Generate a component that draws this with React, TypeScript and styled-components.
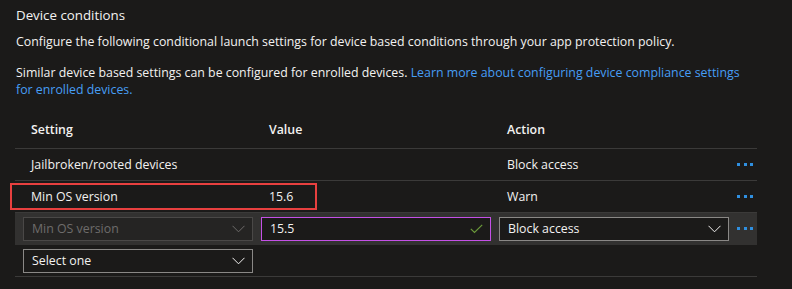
import React from 'react';
import styled, { createGlobalStyle } from 'styled-components';

const GlobalStyle = createGlobalStyle`
  body {
    margin: 0;
    background: #1b1a19;
    color: #f3f2f1;
    font-family: 'Open Sans', 'Liberation Sans', sans-serif;
    font-size: 12.35px;
  }
`;

const Page = styled.div`
  padding: 5px 16px 0 16px;
  width: 792px;
  height: 289px;
  box-sizing: border-box;
`;

const Title = styled.h2`
  margin: 0;
  font-size: 13.3px;
  font-weight: 400;
  line-height: 20px;
`;

const Text = styled.p<{ gap: number }>`
  margin: ${(p) => p.gap}px 0 0;
  line-height: 17px;
`;

const Link = styled.a`
  color: #479ef5;
  text-decoration: none;
`;

const Table = styled.div`
  margin: 15px 0 0 -1px;
  width: 742px;
`;

const Row = styled.div<{ active?: boolean; head?: boolean }>`
  position: relative;
  display: grid;
  grid-template-columns: 230px 230px 230px 20px;
  column-gap: 8px;
  padding-left: 8px;
  padding-bottom: ${(p) => (p.head ? 2 : 0)}px;
  height: ${(p) => (p.head ? 33 : 31)}px;
  align-items: center;
  border-bottom: 1px solid ${(p) => (p.active ? '#323130' : '#3b3a39')};
  background: ${(p) => (p.active ? '#323130' : 'transparent')};
`;

const Cell = styled.div<{ head?: boolean }>`
  padding-left: 8px;
  font-weight: ${(p) => (p.head ? 600 : 400)};
  white-space: nowrap;
`;

const Highlight = styled.div`
  position: absolute;
  left: -5px;
  top: 2px;
  width: 303px;
  height: 23px;
  border: 2px solid #e8403f;
  pointer-events: none;
`;

const Field = styled.div<{ tone: 'disabled' | 'focus' | 'normal' }>`
  display: flex;
  align-items: center;
  justify-content: space-between;
  box-sizing: border-box;
  height: 24px;
  padding: 0 7px 0 8px;
  border: 1px solid
    ${(p) =>
      p.tone === 'disabled' ? '#4a4847' : p.tone === 'focus' ? '#c450e6' : '#8a8886'};
  background: ${(p) => (p.tone === 'disabled' ? '#252423' : '#1b1a19')};
  color: ${(p) => (p.tone === 'disabled' ? '#6e6c6b' : '#f3f2f1')};
`;

const More = styled.div`
  display: flex;
  gap: 3.5px;
  span {
    width: 3px;
    height: 3px;
    background: #2f8fe0;
  }
`;

const Chevron = ({ color }: { color: string }) => (
  <svg width="13" height="8" viewBox="0 0 13 8">
    <path d="M0.5 0.8 L6.5 6.8 L12.5 0.8" fill="none" stroke={color} strokeWidth="1" />
  </svg>
);

const Check = () => (
  <svg width="13" height="10" viewBox="0 0 13 10">
    <path d="M0.8 4.8 L4.5 8.5 L12.2 0.8" fill="none" stroke="#6b9a3a" strokeWidth="1.2" />
  </svg>
);

const Dots = () => (
  <More>
    <span />
    <span />
    <span />
  </More>
);

export default function App() {
  return (
    <Page>
      <GlobalStyle />
      <Title>Device conditions</Title>
      <Text gap={8}>
        Configure the following conditional launch settings for device based conditions through
        your app protection policy.
      </Text>
      <Text gap={14}>
        Similar device based settings can be configured for enrolled devices.{' '}
        <Link href="#">
          Learn more about configuring device compliance settings
          <br />
          for enrolled devices.
        </Link>
      </Text>
      <Table>
        <Row head>
          <Cell head>Setting</Cell>
          <Cell head>Value</Cell>
          <Cell head>Action</Cell>
          <div />
        </Row>
        <Row>
          <Cell>Jailbroken/rooted devices</Cell>
          <Cell />
          <Cell>Block access</Cell>
          <Dots />
        </Row>
        <Row>
          <Cell>Min OS version</Cell>
          <Cell>15.6</Cell>
          <Cell>Warn</Cell>
          <Dots />
          <Highlight />
        </Row>
        <Row active>
          <Field tone="disabled">
            Min OS version
            <Chevron color="#6e6c6b" />
          </Field>
          <Field tone="focus">
            15.5
            <Check />
          </Field>
          <Field tone="normal">
            Block access
            <Chevron color="#f3f2f1" />
          </Field>
          <Dots />
        </Row>
        <Row>
          <Field tone="normal">
            Select one
            <Chevron color="#f3f2f1" />
          </Field>
        </Row>
      </Table>
    </Page>
  );
}
